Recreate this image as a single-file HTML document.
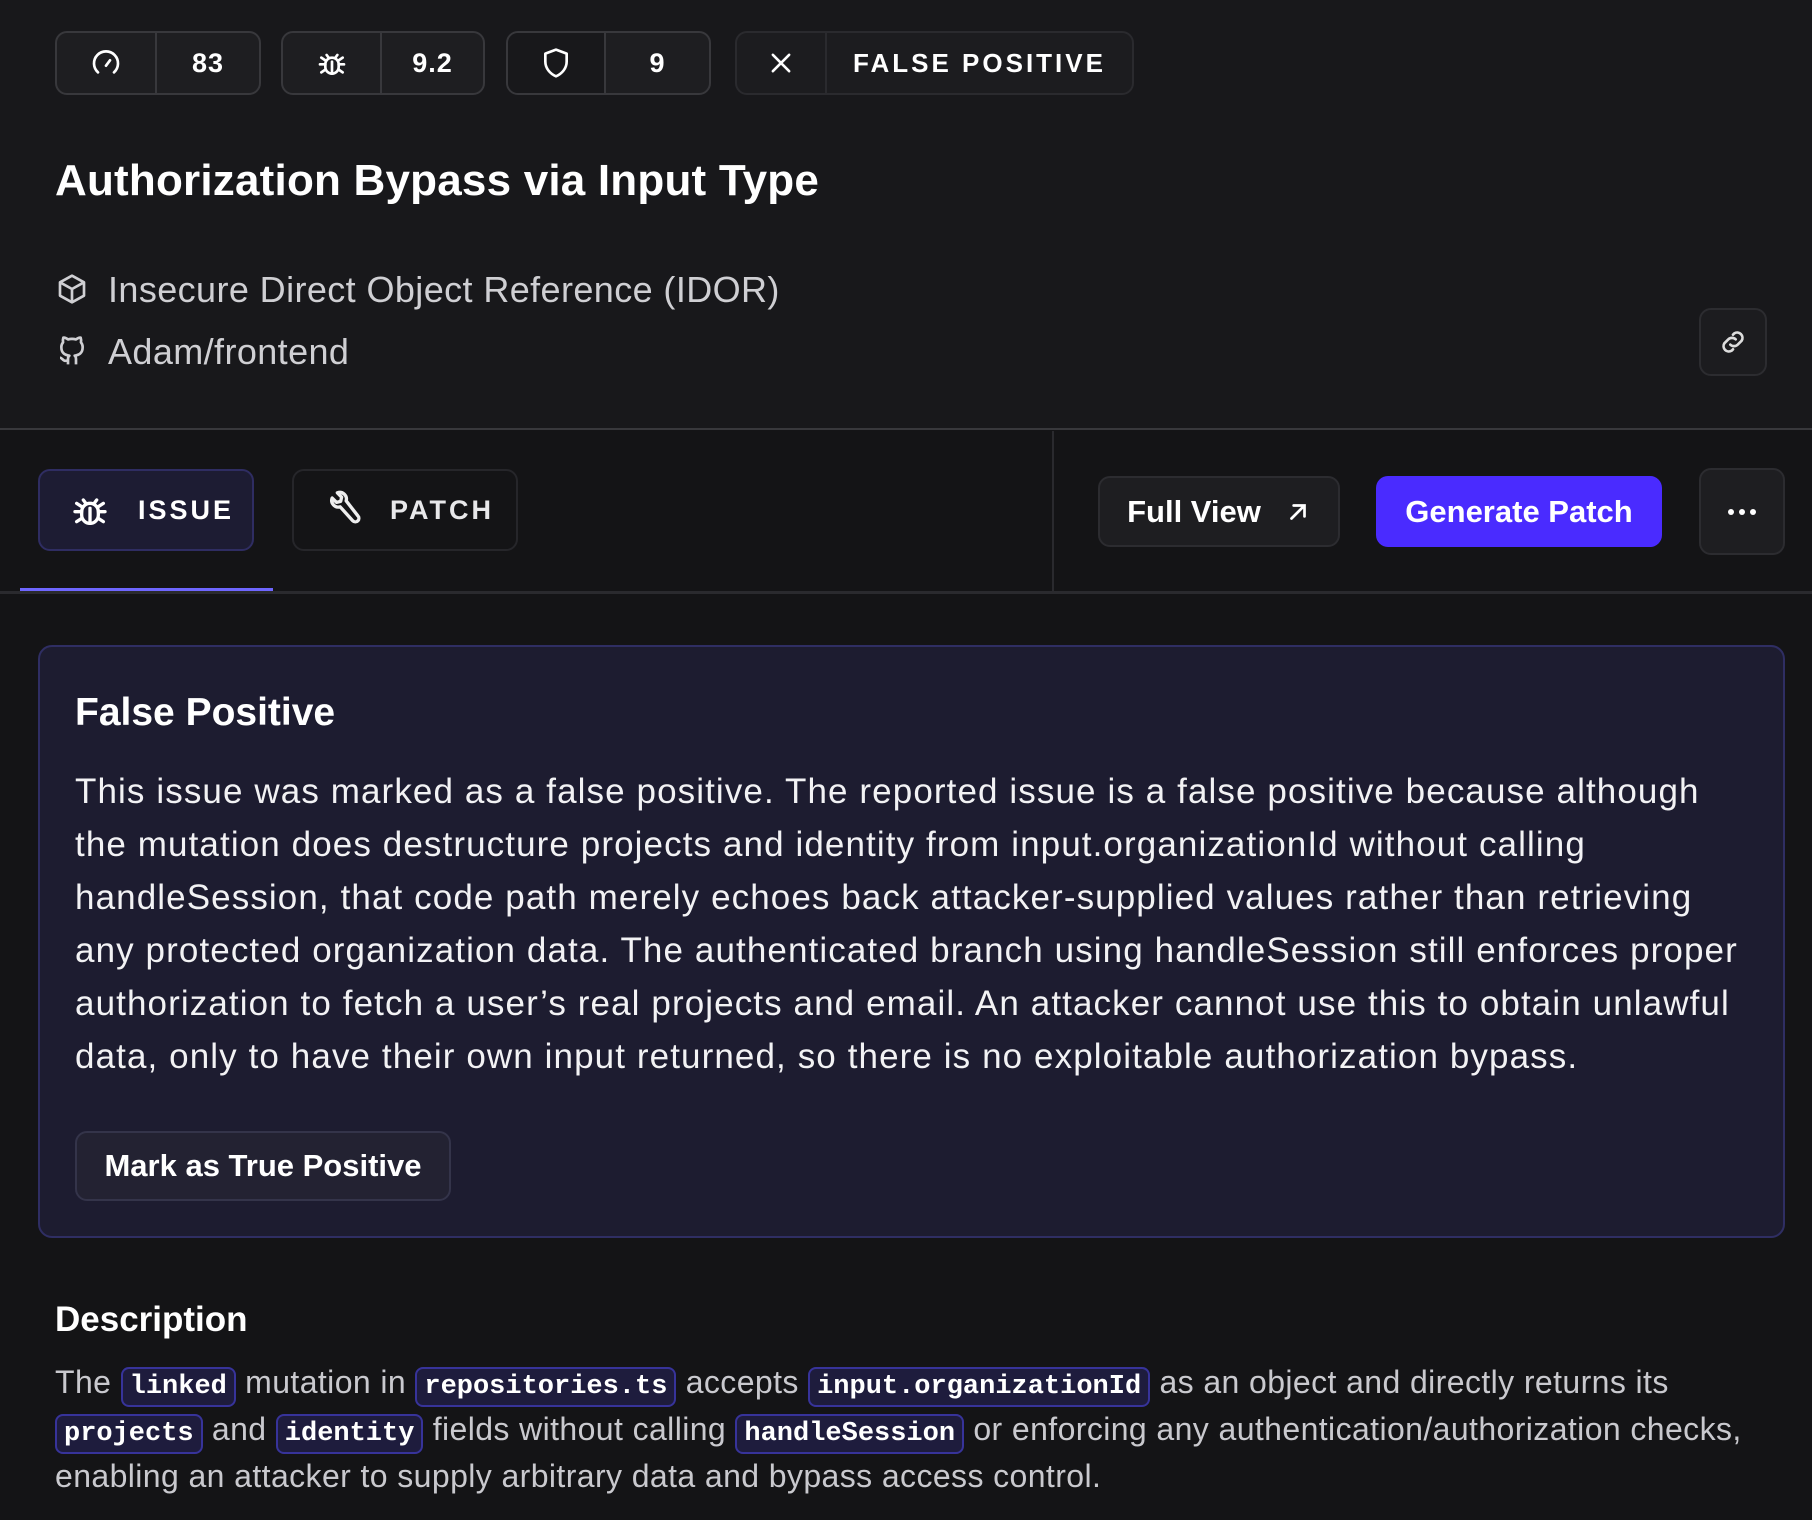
<!DOCTYPE html>
<html><head><meta charset="utf-8"><style>
*{box-sizing:border-box;margin:0;padding:0}
body{width:1812px;height:1520px;background:#141416;font-family:"Liberation Sans",sans-serif;color:#fff;position:relative;overflow:hidden}
.abs{position:absolute}
.hdr{left:0;top:0;width:1812px;height:430px;background:#18181b;border-bottom:2px solid #38383c}
.pill{position:absolute;top:31px;height:64px;border:2px solid #38383c;border-radius:12px;background:#1e1e21;display:flex;align-items:center}
.pill .ic{height:100%;display:flex;align-items:center;justify-content:center;border-right:2px solid #38383c}
.pill .v{flex:1;text-align:center;font-weight:bold;font-size:27px;letter-spacing:1px}
svg{display:block}
.sub{left:108px;font-size:36px;letter-spacing:0.4px;color:#cfcfd3}
.btn{position:absolute;display:flex;align-items:center;justify-content:center;border-radius:12px}
.para{left:75px;top:765px;font-size:35px;letter-spacing:1.1px;line-height:53px;color:#f2f2f4;white-space:nowrap}
.desc{left:55px;top:1360px;font-size:32px;letter-spacing:0.4px;line-height:45.5px;color:#c9c9ce;white-space:nowrap}
code{display:inline-block;line-height:36px;font-family:"Liberation Mono",monospace;font-weight:bold;color:#fff;background:#1e1c3d;border:2px solid #37339a;border-radius:8px;padding:0 7px;font-size:27px;letter-spacing:0}
</style></head><body>
<div class="abs hdr"></div>

<div class="pill" style="left:55px;width:206px"><div class="ic" style="width:100px"><svg width="32" height="32" viewBox="0 0 24 24" fill="none" stroke="#fff" stroke-width="2" stroke-linecap="round"><path d="M6 19A9 9 0 1 1 18 19"/><path d="M12 14l3-4"/></svg></div><div class="v">83</div></div>
<div class="pill" style="left:281px;width:204px"><div class="ic" style="width:99px"><svg width="32" height="32" viewBox="0 0 24 24" fill="none" stroke="#fff" stroke-width="2" stroke-linecap="round"><path d="M8 6l1.5 2M16 6l-1.5 2"/><rect x="7" y="8" width="10" height="12" rx="5"/><path d="M12 11v9M3 13h4M17 13h4M4 8l3 2M20 8l-3 2M4 19l3-2M20 19l-3-2"/></svg></div><div class="v">9.2</div></div>
<div class="pill" style="left:506px;width:205px"><div class="ic" style="width:98px;background:#18181b;border-radius:10px 0 0 10px"><svg width="32" height="32" viewBox="0 0 24 24" fill="none" stroke="#fff" stroke-width="2" stroke-linejoin="round"><path d="M12 2l8 3v6c0 5-3.5 9-8 11-4.5-2-8-6-8-11V5z"/></svg></div><div class="v">9</div></div>
<div class="pill" style="left:735px;width:399px;background:#1c1c1f;border-color:#2a2a2e"><div class="ic" style="width:90px;border-color:#2a2a2e"><svg width="28" height="28" viewBox="0 0 24 24" fill="none" stroke="#fff" stroke-width="2.2" stroke-linecap="round"><path d="M5 5l14 14M19 5L5 19"/></svg></div><div class="v" style="letter-spacing:3px;font-size:26px">FALSE POSITIVE</div></div>

<div class="abs" style="left:55px;top:156px;font-size:44px;font-weight:bold;letter-spacing:0.2px">Authorization Bypass via Input Type</div>

<svg class="abs" style="left:56px;top:273px" width="32" height="32" viewBox="0 0 24 24" fill="none" stroke="#cfcfd3" stroke-width="2" stroke-linejoin="round"><path d="M12 2l9 5v10l-9 5-9-5V7z"/><path d="M3 7l9 5 9-5M12 12v10"/></svg>
<div class="abs sub" style="top:269px">Insecure Direct Object Reference (IDOR)</div>
<svg class="abs" style="left:56px;top:335px" width="32" height="32" viewBox="0 0 24 24" fill="none" stroke="#cfcfd3" stroke-width="2" stroke-linejoin="round"><path d="M9 22v-4c0-1 .3-2 1-2.5-3-.5-6-1.5-6-6.5 0-1.3.5-2.5 1.3-3.5-.2-1-.2-2.3.2-3.5 0 0 1.2-.3 3.5 1.3a12 12 0 0 1 6 0C17.3 1.7 18.5 2 18.5 2c.4 1.2.4 2.5.2 3.5.8 1 1.3 2.2 1.3 3.5 0 5-3 6-6 6.5.7.5 1 1.5 1 2.5v4"/><path d="M9 19c-4 1.5-4-2-6-2"/></svg>
<div class="abs sub" style="top:331px">Adam/frontend</div>

<div class="btn" style="left:1699px;top:308px;width:68px;height:68px;border:2px solid #2c2c30;background:#1c1c1f"><svg width="32" height="32" viewBox="0 0 24 24" fill="none" stroke="#ddd" stroke-width="2" stroke-linecap="round"><path d="M10 14a4 4 0 0 0 5.5 0l3-3a4 4 0 0 0-5.5-5.5l-1 1"/><path d="M14 10a4 4 0 0 0-5.5 0l-3 3a4 4 0 0 0 5.5 5.5l1-1"/></svg></div>

<div class="abs" style="left:1052px;top:431px;width:2px;height:161px;background:#2a2a2e"></div>
<div class="abs" style="left:0;top:591px;width:1812px;height:3px;background:#2a2a2e"></div>
<div class="abs" style="left:20px;top:588px;width:253px;height:3px;background:#6e66ff"></div>

<div class="btn" style="left:38px;top:469px;width:216px;height:82px;background:#1d1c33;border:2px solid #2f2d62;justify-content:flex-start;padding-left:30px"><svg width="40" height="40" viewBox="0 0 24 24" fill="none" stroke="#fff" stroke-width="2" stroke-linecap="round"><path d="M8 6l1.5 2M16 6l-1.5 2"/><rect x="7" y="8" width="10" height="12" rx="5"/><path d="M12 11v9M3 13h4M17 13h4M4 8l3 2M20 8l-3 2M4 19l3-2M20 19l-3-2"/></svg><span style="margin-left:28px;font-weight:bold;font-size:27px;letter-spacing:3px">ISSUE</span></div>
<div class="btn" style="left:292px;top:469px;width:226px;height:82px;background:#141416;border:2px solid #26262a;justify-content:flex-start;padding-left:28px"><svg width="40" height="40" viewBox="0 0 24 24" fill="none" stroke="#eee" stroke-width="2" stroke-linejoin="round"><path d="M14.5 6.5a4 4 0 0 0-5.3-4.8l2.6 2.6-.6 2.5-2.5.6-2.6-2.6a4 4 0 0 0 4.8 5.3l7.6 8.4a2 2 0 0 0 3-3z"/></svg><span style="margin-left:28px;font-weight:bold;font-size:27px;letter-spacing:3px;color:#e8e8ea">PATCH</span></div>

<div class="btn" style="left:1098px;top:476px;width:242px;height:71px;background:#1e1e21;border:2px solid #2c2c30;font-size:31px;font-weight:bold">Full View<svg style="margin-left:24px" width="26" height="26" viewBox="0 0 24 24" fill="none" stroke="#fff" stroke-width="2.5" stroke-linecap="round"><path d="M6 18L18 6M8 6h10v10"/></svg></div>
<div class="btn" style="left:1376px;top:476px;width:286px;height:71px;background:#4a2bff;font-size:31px;font-weight:bold">Generate Patch</div>
<div class="btn" style="left:1699px;top:468px;width:86px;height:87px;background:#1e1e21;border:2px solid #2c2c30"><svg width="30" height="8" viewBox="0 0 30 8"><circle cx="4" cy="4" r="3" fill="#fff"/><circle cx="15" cy="4" r="3" fill="#fff"/><circle cx="26" cy="4" r="3" fill="#fff"/></svg></div>

<div class="abs" style="left:38px;top:645px;width:1747px;height:593px;background:#1d1c30;border:2px solid #2f2e63;border-radius:14px"></div>
<div class="abs" style="left:75px;top:691px;font-size:39px;font-weight:bold">False Positive</div>
<div class="abs para">This issue was marked as a false positive. The reported issue is a false positive because although<br>the mutation does destructure projects and identity from input.organizationId without calling<br>handleSession, that code path merely echoes back attacker-supplied values rather than retrieving<br>any protected organization data. The authenticated branch using handleSession still enforces proper<br>authorization to fetch a user’s real projects and email. An attacker cannot use this to obtain unlawful<br>data, only to have their own input returned, so there is no exploitable authorization bypass.</div>
<div class="btn" style="left:75px;top:1131px;width:376px;height:70px;background:#232232;border:2px solid #34344a;font-size:31px;font-weight:bold">Mark as True Positive</div>

<div class="abs" style="left:55px;top:1300px;font-size:35px;font-weight:bold">Description</div>
<div class="abs desc">The <code>linked</code> mutation in <code>repositories.ts</code> accepts <code>input.organizationId</code> as an object and directly returns its<br><code>projects</code> and <code>identity</code> fields without calling <code>handleSession</code> or enforcing any authentication/authorization checks,<br>enabling an attacker to supply arbitrary data and bypass access control.</div>
</body></html>
